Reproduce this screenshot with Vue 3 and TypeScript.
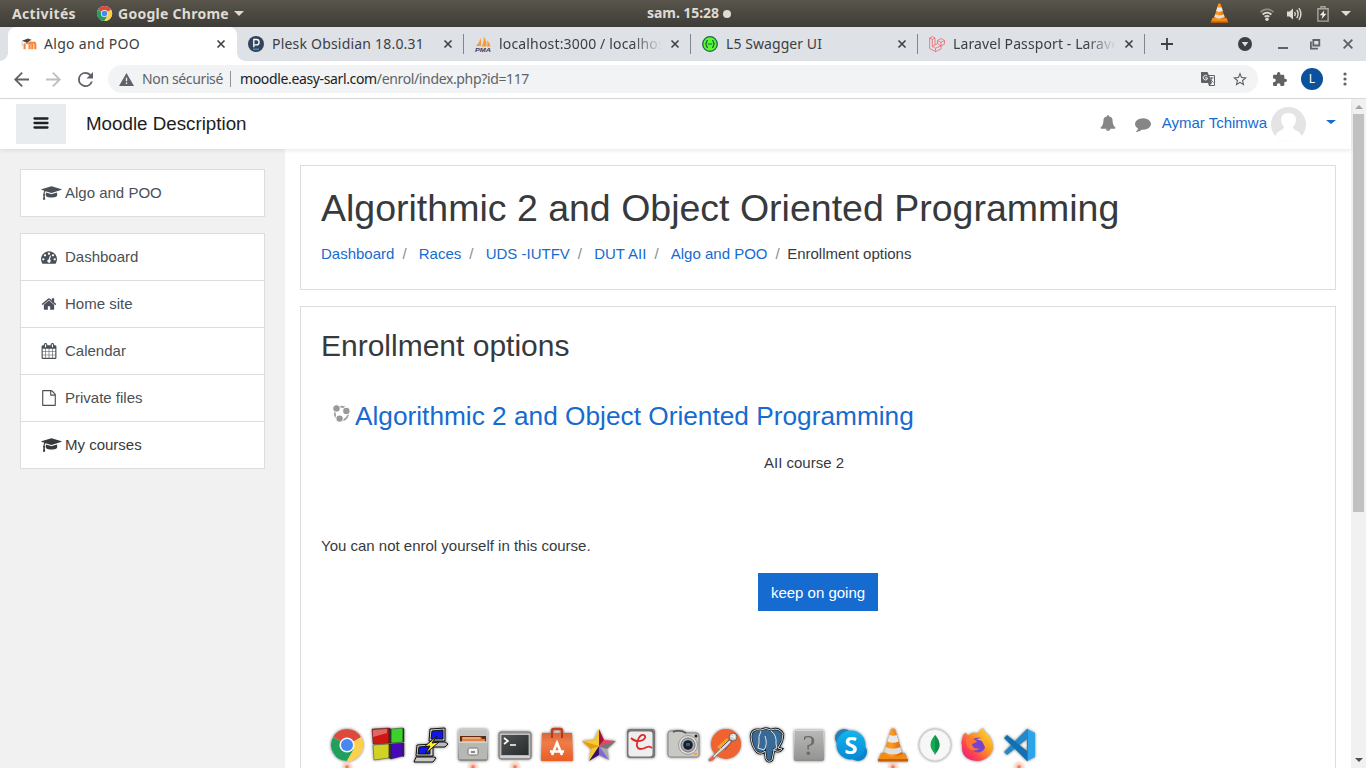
<script setup lang="ts">
import type { Directive } from 'vue'

interface Tab { title: string; icon: string; width: number; fade?: boolean }
interface NavItem { label: string; icon: string; dark?: boolean }

const tabs: Tab[] = [
  { title: 'Algo and POO', icon: 'moodle', width: 96 },
  { title: 'Plesk Obsidian 18.0.31', icon: 'plesk', width: 152 },
  { title: 'localhost:3000 / localhost', icon: 'pma', width: 171, fade: true },
  { title: 'L5 Swagger UI', icon: 'swagger', width: 96 },
  { title: 'Laravel Passport - Laravel', icon: 'laravel', width: 170, fade: true },
]

const nav: NavItem[] = [
  { label: 'Dashboard', icon: 'dash' },
  { label: 'Home site', icon: 'home' },
  { label: 'Calendar', icon: 'calendar' },
  { label: 'Private files', icon: 'file' },
  { label: 'My courses', icon: 'cap', dark: true },
]

const crumbs = ['Dashboard', 'Races', 'UDS -IUTFV', 'DUT AII', 'Algo and POO']

const glyphs: Record<string, string> = {
  cap: 'M1774 836l18 316q4 69-82 128t-235 93.5-323 34.5-323-34.5-235-93.5-82-128l18-316 574 181q22 7 48 7t48-7zm530-324q0 23-22 31l-1120 352q-4 1-10 1t-10-1l-652-206q-43 34-71 111.5t-34 178.5q63 36 63 109 0 69-58 107l58 433q2 14-8 25-9 11-24 11h-192q-15 0-24-11-10-11-8-25l58-433q-58-38-58-107 0-73 65-111 11-207 98-330l-333-104q-22-8-22-31t22-31l1120-352q4-1 10-1t10 1l1120 352q22 8 22 31z',
  dash: 'M384 1152q0-53-37.5-90.5t-90.5-37.5-90.5 37.5-37.5 90.5 37.5 90.5 90.5 37.5 90.5-37.5 37.5-90.5zm192-448q0-53-37.5-90.5t-90.5-37.5-90.5 37.5-37.5 90.5 37.5 90.5 90.5 37.5 90.5-37.5 37.5-90.5zm428 481l101-382q6-26-7.5-48.5t-38.5-29.5-48 6.5-30 39.5l-101 382q-60 5-107 43.5t-63 98.5q-20 77 20 146t117 89 146-20 89-117q16-60-6-117t-72-91zm660-33q0-53-37.5-90.5t-90.5-37.5-90.5 37.5-37.5 90.5 37.5 90.5 90.5 37.5 90.5-37.5 37.5-90.5zm-640-640q0-53-37.5-90.5t-90.5-37.5-90.5 37.5-37.5 90.5 37.5 90.5 90.5 37.5 90.5-37.5 37.5-90.5zm448 192q0-53-37.5-90.5t-90.5-37.5-90.5 37.5-37.5 90.5 37.5 90.5 90.5 37.5 90.5-37.5 37.5-90.5zm320 448q0 261-141 483-19 29-54 29h-1402q-35 0-54-29-141-221-141-483 0-182 71-348t191-286 286-191 348-71 348 71 286 191 191 286 71 348z',
  home: 'M1472 992v480q0 26-19 45t-45 19h-384v-384h-256v384h-384q-26 0-45-19t-19-45v-480q0-1 .5-3t.5-3l575-474 575 474q1 2 1 6zm223-69l-62 74q-8 9-21 11h-3q-13 0-21-7l-692-577-692 577q-12 8-24 7-13-2-21-11l-62-74q-8-10-7-23.500t11-21.500l719-599q32-26 76-26t76 26l244 204v-195q0-14 9-23t23-9h192q14 0 23 9t9 23v408l219 182q10 8 11 21.500t-7 23.500z',
  calendar: 'M192 1664h288v-288h-288v288zm352 0h320v-288h-320v288zm-352-352h288v-320h-288v320zm352 0h320v-320h-320v320zm-352-384h288v-288h-288v288zm736 736h320v-288h-320v288zm-384-736h320v-288h-320v288zm768 736h288v-288h-288v288zm-384-352h320v-320h-320v320zm-352-864v-288q0-13-9.500-22.500t-22.500-9.500h-64q-13 0-22.500 9.500t-9.500 22.500v288q0 13 9.500 22.500t22.500 9.500h64q13 0 22.500-9.500t9.500-22.500zm736 864h288v-320h-288v320zm-384-384h320v-288h-320v288zm384 0h288v-288h-288v288zm32-480v-288q0-13-9.500-22.500t-22.500-9.500h-64q-13 0-22.500 9.500t-9.500 22.500v288q0 13 9.500 22.500t22.500 9.500h64q13 0 22.500-9.500t9.500-22.500zm384-64v1280q0 52-38 90t-90 38h-1408q-52 0-90-38t-38-90v-1280q0-52 38-90t90-38h128v-96q0-66 47-113t113-47h64q66 0 113 47t47 113v96h384v-96q0-66 47-113t113-47h64q66 0 113 47t47 113v96h128q52 0 90 38t38 90z',
  file: 'M1596 380q28 28 48 76t20 88v1152q0 40-28 68t-68 28h-1344q-40 0-68-28t-28-68v-1600q0-40 28-68t68-28h896q40 0 88 20t76 48zm-444-244v376h376q-10-29-22-41l-313-313q-12-12-41-22zm384 1528v-1024h-416q-40 0-68-28t-28-68v-416h-768v1536h1280z',
  bell: 'M912 1696q0-16-16-16-59 0-101.500-42.500t-42.500-101.500q0-16-16-16t-16 16q0 73 51.500 124.500t124.500 51.500q16 0 16-16zm816-288q0 52-38 90t-90 38h-448q0 106-75 181t-181 75-181-75-75-181h-448q-52 0-90-38t-38-90q50-42 91-88t85-119.500 74.500-158.500 50-206 19.500-260q0-152 117-282.500t307-158.500q-8-19-8-39 0-40 28-68t68-28 68 28 28 68q0 20-8 39 190 28 307 158.500t117 282.500q0 139 19.500 260t50 206 74.500 158.500 85 119.500 91 88z',
  comment: 'M1792 896q0 174-120 321.500t-326 233-450 85.500q-70 0-145-8-198 175-460 242-49 14-114 22-17 2-30.500-9t-17.500-29v-1q-3-4-.5-12t2-10 4.500-9.500l6-9 7-8.500 8-9q7-8 31-34.500t34.500-38 31-39.500 32.500-51 27-59 26-76q-157-89-247.500-220t-90.500-281q0-130 71-248.500t191-204.500 286-136.500 348-50.500q244 0 450 85.500t326 233 120 321.500z',
}

// Spreads a label's letters so that the line takes the given width in pixels.
const vFit: Directive<HTMLElement, number> = {
  mounted(el, binding) {
    const natural = el.getBoundingClientRect().width
    const count = (el.textContent ?? '').length
    el.style.letterSpacing = `${(binding.value - natural) / count}px`
  },
}
</script>

<template>
  <div class="screen">
    <svg class="defs" width="0" height="0">
      <defs>
        <linearGradient id="metal" x1="0" y1="0" x2="0" y2="1"><stop offset="0" stop-color="#d8d8d6" /><stop offset="1" stop-color="#8c8c8a" /></linearGradient>
        <linearGradient id="dark" x1="0" y1="0" x2="1" y2="1"><stop offset="0" stop-color="#555" /><stop offset="1" stop-color="#242a2a" /></linearGradient>
        <linearGradient id="bag" x1="0" y1="0" x2="0" y2="1"><stop offset="0" stop-color="#d9643a" /><stop offset=".35" stop-color="#f07c48" /><stop offset="1" stop-color="#ea5d24" /></linearGradient>
        <linearGradient id="fox" x1="1" y1="0" x2="0" y2="1"><stop offset="0" stop-color="#ffe83a" /><stop offset=".4" stop-color="#ff9a1f" /><stop offset=".7" stop-color="#ff4350" /><stop offset="1" stop-color="#e01588" /></linearGradient>
        <linearGradient id="sky" x1="0" y1="0" x2="0" y2="1"><stop offset="0" stop-color="#13b5ed" /><stop offset="1" stop-color="#0589d6" /></linearGradient>
        <linearGradient id="cone" x1="0" y1="0" x2="1" y2="0"><stop offset="0" stop-color="#f08a14" /><stop offset=".4" stop-color="#ff9b25" /><stop offset="1" stop-color="#d95f00" /></linearGradient>
        <symbol id="chrome" viewBox="0 0 36 36">
          <circle cx="18" cy="18" r="16" fill="#fff" />
          <path d="M18 18L4.140 10A16 16 0 0 1 31.860 10Z" fill="#dc4a3d" />
          <path d="M18 18L4.140 10A16 16 0 0 0 18 34L25 22Z" fill="#20a05c" />
          <path d="M18 18L31.860 10A16 16 0 0 1 18 34L25 22Z" fill="#fdd04c" />
          <path d="M18 10H31.860L25 14Z" fill="#dc4a3d" />
          <path d="M18 34l7-12v-7l7-5A16 16 0 0 1 18 34Z" fill="#fdd04c" />
          <circle cx="18" cy="18" r="7.600" fill="#f5f5f5" />
          <circle cx="18" cy="18" r="6" fill="#4687f4" />
        </symbol>
        <symbol id="vlc" viewBox="0 0 36 36">
          <path d="M6 26h24l3 8H3z" fill="#f28b16" /><path d="M3 32h30v2.500H3z" fill="#c95f00" />
          <path d="M16 2q2-1 4 0l7.500 25q-9.500 6-19 0z" fill="url(#cone)" />
          <path d="M14.300 8q3.700 1.500 7.400 0l2 6.500q-5.700 2.500-11.400 0z" fill="#e9e9e9" />
          <path d="M10.700 20q7.300 3.500 14.600 0l1.600 5q-9 5-17.800 0z" fill="#dedede" />
        </symbol>
      </defs>
    </svg>

    <header class="topbar">
      <div class="act"><span v-fit="64">Activités</span></div>
      <div class="app-menu">
        <svg class="ic16" viewBox="0 0 36 36"><use href="#chrome" /></svg>
        <span v-fit="111">Google Chrome</span><i class="tri"></i>
      </div>
      <div class="clock"><span v-fit="72">sam. 15:28</span><i class="dot"></i></div>
      <div class="tray">
        <svg class="vlc-tray" viewBox="0 0 36 36"><use href="#vlc" /></svg>
        <svg class="wifi" viewBox="0 0 16 16" fill="none" stroke-width="1.700"><path d="M1.500 6Q8 .5 14.500 6" stroke="#8b8983" /><path d="M3.600 8.500Q8 4.800 12.400 8.500M5.600 10.800Q8 9 10.400 10.800" stroke="#dfdbd2" /><circle cx="8" cy="13.300" r="1.700" fill="#dfdbd2" /></svg>
        <svg class="vol" viewBox="0 0 16 16" fill="none" stroke="#dfdbd2" stroke-width="1.400"><path d="M1 5.500h2.500L7 2.500v11L3.500 10.500H1z" fill="#dfdbd2" stroke="none" /><path d="M8.700 6q1.200 2 0 4M10.800 4q2.600 4 0 8M12.900 2.200q4 5.800 0 11.600" /></svg>
        <svg class="bat" viewBox="0 0 12 16" fill="none" stroke="#aaa69e" stroke-width="1.400"><path d="M4 2.200V.7h4v1.500M.9 2.700h10.200v12.400H.9z" /><path d="M7.300 4.500L2.800 9.200h2.700l-1 4 4.900-5.400H6.800z" fill="#eee" stroke="none" /></svg>
        <i class="tri tray-tri"></i>
      </div>
    </header>

    <div class="tabstrip">
      <div v-for="(tab, i) in tabs" :key="tab.title" class="tab" :class="{ active: i === 0, sep: i > 1 }">
        <svg v-if="tab.icon === 'moodle'" class="fav" viewBox="0 0 16 16"><path d="M3.600 13.300V7.500M8.600 13.300V8.500q0-1.800 1.500-1.800M8.600 8.500q0-2 1.400-2 1.300 0 1.300 2v4.800M11.300 8.500q0-2 1.500-2t1.500 2v4.800" fill="none" stroke="#f8893c" stroke-width="2.200" /><path d="M4.800 6.200h4v2h-4z" fill="#f8893c" /><path d="M1 4.800l6-2.300 3.500 1.200L6 6.800z" fill="#494440" /><path d="M1.200 5v5" stroke="#b8aca0" stroke-width=".6" /></svg>
        <svg v-else-if="tab.icon === 'plesk'" class="fav" viewBox="0 0 16 16"><circle cx="8" cy="8" r="8" fill="#34435c" /><path d="M5.800 11.200V3.500H8.400a2.300 2.300 0 0 1 0 5.400H6" fill="none" stroke="#fff" stroke-width="1.300" /><path d="M5 13.200h6" stroke="#44afe0" /></svg>
        <svg v-else-if="tab.icon === 'pma'" class="fav" viewBox="0 0 16 16"><path d="M1 10q4-4 4.500-8 1 4 .5 8zM6.500 10.500Q9.500 5 8.500.5q3.500 4 3 10zM12 10.500q.8-3 0-6 3 2 3.500 6z" fill="#f59c36" /><text x="0" y="15.700" font-size="6" font-weight="bold" font-style="italic" font-family="Liberation Sans" fill="#393966" textLength="16" lengthAdjust="spacingAndGlyphs">PMA</text></svg>
        <svg v-else-if="tab.icon === 'swagger'" class="fav" viewBox="0 0 16 16"><circle cx="8" cy="8" r="7.300" fill="#55fa36" stroke="#266342" stroke-width="1.300" /><path d="M6 4.500q-1.500 0-1.500 1.700Q4.500 8 3 8q1.500 0 1.500 1.800Q4.500 11.500 6 11.500M10 4.500q1.500 0 1.500 1.700Q11.500 8 13 8q-1.500 0-1.500 1.800 0 1.700-1.500 1.700M5.800 8h4.400" fill="none" stroke="#23563b" stroke-width="1.200" /></svg>
        <svg v-else class="fav" viewBox="0 0 16 16" fill="none" stroke="#f6636c" stroke-width=".8"><path d="M.6 2L3.300.5 6 2v7l2.500-1.500v-3l3.500-2 3.500 2v3.600L12 10v3l-5.500 2.600L.6 12.400zM.6 2l2.700 1.500L6 2M3.300 3.500v7L6 9M8.500 4.500L12 6.300l3.500-1.800M12 6.300V10L8.500 7.500M3.300 10.500l3.200 1.700L12 9.900M6.500 12.200v3.400" /></svg>
        <div class="title" :class="{ fade: tab.fade }"><span v-fit="tab.width">{{ tab.title }}</span></div>
        <svg class="close" viewBox="0 0 8 8"><path d="M.5.5l7 7M7.500.5l-7 7" stroke="#3c4043" stroke-width="1.600" /></svg>
      </div>
      <div class="newtab"><svg viewBox="0 0 12 12"><path d="M6 0v12M0 6h12" stroke="#3c4043" stroke-width="1.800" /></svg></div>
      <div class="winctl">
        <svg class="w14" viewBox="0 0 14 14"><circle cx="7" cy="7" r="7" fill="#3c4043" /><path d="M3.700 5h6.600L7 9.500z" fill="#dee1e6" /></svg>
        <svg class="w10" viewBox="0 0 10 14"><path d="M0 11h10" stroke="#5f6368" stroke-width="2" /></svg>
        <svg class="w10" viewBox="0 0 10 14" fill="none" stroke="#5f6368" stroke-width="1.800"><path d="M3.300 3h6v5.500h-6zM.9 4.500v7.200h7" /></svg>
        <svg class="w10" viewBox="0 0 10 14"><path d="M.7 2.700l8.600 8.600M9.300 2.700L.7 11.300" stroke="#5f6368" stroke-width="1.900" /></svg>
      </div>
    </div>

    <div class="toolbar">
      <svg class="nv" viewBox="4 4 16 16"><path d="M20 11H7.830l5.590-5.590L12 4l-8 8 8 8 1.410-1.410L7.830 13H20z" fill="#5f6368" /></svg>
      <svg class="nv" viewBox="4 4 16 16"><path d="M12 4l-1.410 1.410L16.170 11H4v2h12.170l-5.580 5.590L12 20l8-8z" fill="#bcbec1" /></svg>
      <svg class="nv" viewBox="4 4 16 16"><path d="M17.650 6.350A7.960 7.960 0 0 0 12 4a8 8 0 1 0 7.730 10h-2.080A6 6 0 1 1 12 6c1.660 0 3.140.690 4.220 1.780L13 11h7V4z" fill="#5f6368" /></svg>
      <div class="omni">
        <svg class="warn" viewBox="1 2 22 19"><path d="M1 21h22L12 2zm12-3h-2v-2h2zm0-4h-2v-5h2z" fill="#5f6368" /></svg>
        <span v-fit="81" class="ns">Non sécurisé</span><i class="bar"></i>
        <span v-fit="289" class="url"><b>moodle.easy-sarl.com</b>/enrol/index.php?id=117</span>
        <svg class="tr" viewBox="0 0 14 14"><path d="M0 0h6.500l1.300 3H13q1 0 1 1v9q0 1-1 1H8l-1-3H1q-1 0-1-1z" fill="#5f6368" /><path d="M8.300 4H13v9H9l2-2z" fill="#f1f3f4" /><path d="M6.200 4A2.300 2.300 0 1 0 6.300 7.200V5.900H4" fill="none" stroke="#f1f3f4" stroke-width="1" /><path d="M8.500 6h4M10.500 5v1q0 2-1.500 3M9.500 7.500l3 3" fill="none" stroke="#5f6368" stroke-width=".9" /></svg>
        <svg class="star" viewBox="2 2 20 19"><path d="M22 9.240l-7.190-.62L12 2 9.190 8.630 2 9.240l5.460 4.730L5.820 21 12 17.270 18.180 21l-1.630-7.030zM12 15.400l-3.760 2.270 1-4.280-3.320-2.880 4.380-.38L12 6.100l1.710 4.040 4.380.38-3.320 2.880 1 4.280z" fill="#5f6368" /></svg>
      </div>
      <svg class="puzzle" viewBox="2 1 21 21"><path d="M20.500 11H19V7a2 2 0 0 0-2-2h-4V3.500a2.500 2.500 0 0 0-5 0V5H4a2 2 0 0 0-2 2v3.800h1.500a2.700 2.700 0 0 1 0 5.400H2V20a2 2 0 0 0 2 2h3.800v-1.500a2.700 2.700 0 0 1 5.400 0V22H17a2 2 0 0 0 2-2v-4h1.500a2.500 2.500 0 0 0 0-5z" fill="#5f6368" /></svg>
      <div class="profile">L</div>
      <svg class="dots" viewBox="0 0 4 14" fill="#5f6368"><circle cx="2" cy="2" r="1.600" /><circle cx="2" cy="7" r="1.600" /><circle cx="2" cy="12" r="1.600" /></svg>
    </div>

    <div class="viewport">
      <div class="page">
        <nav class="navbar">
          <button class="burger" aria-label="Menu"><svg viewBox="0 0 14 12"><path d="M.5 1.500h13M.5 6h13M.5 10.500h13" stroke="#1d2125" stroke-width="2.300" stroke-linecap="round" /></svg></button>
          <span class="brand">Moodle Description</span>
          <div class="user">
            <svg class="bell" viewBox="0 0 1792 1792"><path :d="glyphs.bell" /></svg>
            <svg class="comment" viewBox="0 0 1792 1792"><path :d="glyphs.comment" /></svg>
            <a>Aymar Tchimwa</a>
            <svg class="avatar" viewBox="0 0 35 35"><defs><clipPath id="round"><circle cx="17.500" cy="17.500" r="17.500" /></clipPath></defs><g clip-path="url(#round)"><path d="M0 0h35v35H0z" fill="#e4e4e4" /><path d="M10 13Q10 6 17.500 6T25 13q0 4-2.800 6.300-.3 2.700 1.500 3.500 6 2 7.300 7V35h-27v-5.200q1.500-5 7.300-7 1.800-.8 1.500-3.500Q10 17 10 13z" fill="#fff" /></g></svg>
            <i class="caret"></i>
          </div>
        </nav>
        <div class="body">
          <aside>
            <div class="list"><a class="item"><svg class="cap" viewBox="0 0 2304 1792"><path :d="glyphs.cap" /></svg>Algo and POO</a></div>
            <div class="list">
              <a v-for="n in nav" :key="n.label" class="item" :class="{ strong: n.dark }">
                <svg :class="n.icon" :viewBox="n.icon === 'cap' ? '0 0 2304 1792' : '0 0 1792 1792'"><path :d="glyphs[n.icon]" /></svg>{{ n.label }}
              </a>
            </div>
          </aside>
          <main>
            <section class="card head">
              <h1>Algorithmic 2 and Object Oriented Programming</h1>
              <div class="crumbs"><template v-for="c in crumbs" :key="c"><a>{{ c }}</a><span class="slash">/</span></template><span class="here">Enrollment options</span></div>
            </section>
            <section class="card content">
              <h2>Enrollment options</h2>
              <h3><svg viewBox="0 0 16 16"><circle cx="8" cy="8" r="6.300" fill="none" stroke="#a5a5a5" stroke-width="1.800" /><g fill="#999" stroke="#fff" stroke-width="1"><circle cx="3.300" cy="3.200" r="3.500" /><circle cx="12.600" cy="5.600" r="3.500" /><circle cx="6.200" cy="12.800" r="3.500" /></g></svg><a>Algorithmic 2 and Object Oriented Programming</a></h3>
              <p class="summary">AII course 2</p>
              <p class="notice">You can not enrol yourself in this course.</p>
              <button class="go">keep on going</button>
            </section>
          </main>
        </div>
      </div>
      <div class="scroll"><i class="up"></i><i class="thumb"></i><i class="down"></i></div>
    </div>

    <div class="dock">
      <div class="cell run"><svg viewBox="0 0 36 36"><use href="#chrome" /></svg></div>
      <div class="cell"><svg viewBox="0 0 36 36"><g stroke="#222" stroke-width=".4"><path d="M1 2l17-1v15L2 17z" fill="#ce1712" /><path d="M20 2l12-1v14l-12 1z" fill="#3cd02a" /><path d="M2 18l16-1v14L3 33z" fill="#d2d126" /><path d="M20 17l12-1v13l-12 3z" fill="#4708b7" /><path d="M18 1l2 1v14l-2 0zM18 17l2 0v15l-2-1zM32 1l1 1v13l-1 0zM32 16l1 0v13l-1 1z" fill="#333" /></g><path d="M2 3l14-1v4L2 10z" fill="#fff" opacity=".35" /></svg></div>
      <div class="cell"><svg viewBox="0 0 36 36"><g stroke="#111" stroke-width="1"><path d="M17 2l15-1v13H16z" fill="#d0d0cc" /><path d="M19 4l11-1v9H18z" fill="#1117e8" /><path d="M17 15h15l3 2-3 3H16z" fill="#bbb" /><path d="M4 18l16-1v12H3z" fill="#d0d0cc" /><path d="M6 20l11-1v8H5z" fill="#1117e8" /><path d="M3 30h18l2 1-3 4H1z" fill="#c9c9c5" /><path d="M24 9L11 20l6-1-5 8 14-12-7 1z" fill="#fff12d" /></g></svg></div>
      <div class="cell run"><svg viewBox="0 0 36 36"><rect x="3" y="2" width="30" height="32" rx="3" fill="url(#metal)" /><path d="M4 4q0-1.500 2-1.500h24q2 0 2 1.500v5H4z" fill="#c3c3bf" /><path d="M5 9h26v6H5z" fill="#5d2b16" /><path d="M7 10h19l1 2h3v3H7z" fill="#e28343" /><path d="M8 11h17" stroke="#f7cda0" /><path d="M4 15h28v17H4z" fill="#b7b7b4" /><path d="M4 15h28" stroke="#eee" /><rect x="13" y="21" width="10" height="7" rx="1.500" fill="#f2f2f2" stroke="#777" /><path d="M16 24h4v2h-4z" fill="#888" /></svg></div>
      <div class="cell run"><svg viewBox="0 0 36 36"><rect x="2" y="5" width="32" height="27" rx="2" fill="#aaa" stroke="#777" /><rect x="4" y="7.500" width="28" height="21" fill="url(#dark)" stroke="#eee" stroke-width=".6" /><path d="M7 11l4 3-4 3M13 18h6" fill="none" stroke="#fff" stroke-width="1.600" /><path d="M3 30h30" stroke="#ddd" stroke-width="1.500" /></svg></div>
      <div class="cell"><svg viewBox="0 0 36 36"><path d="M13 8V4q0-2 2-2h6q2 0 2 2v4" fill="none" stroke="#ca3f18" stroke-width="2.500" /><path d="M3 6h30l1 27q0 1-1 1H3q-1 0-1-1z" fill="url(#bag)" /><path d="M13 28l5-12 5 12M11 24.500h14" fill="none" stroke="#fff" stroke-width="2.600" /><path d="M13 6v5M23 6v5" stroke="#a92f10" stroke-width="1.700" /></svg></div>
      <div class="cell"><svg viewBox="0 0 36 36"><path d="M18 2l-5 11-12 1 9 8-2 12 10-6z" fill="#f4ca31" /><path d="M18 2l5 11-5 6z" fill="#a50f3b" /><path d="M23 13l12 1-17 6z" fill="#ee4060" /><path d="M35 14l-9 8-8-3z" fill="#777" /><path d="M26 22l2 11-10-13z" fill="#aaa" /><path d="M18 19v9L8 34z" fill="#361071" /><path d="M18 19l10 14-10-5z" fill="#8566d4" /><path d="M1 14l17 5-8 3z" fill="#e79b15" /></svg></div>
      <div class="cell"><svg viewBox="0 0 36 36"><rect x="4" y="2" width="28" height="29" rx="3" fill="#777" /><rect x="5.500" y="4.500" width="24" height="25" rx="3" fill="#eee" /><path d="M8 11q5 5 12 2 4-3 1-5-4-1-6 5-3 8 2 9 4 0 7-2 3-1 5 1" fill="none" stroke="#e02a28" stroke-width="1.800" /></svg></div>
      <div class="cell"><svg viewBox="0 0 36 36"><path d="M6 4h11q2 0 3 2h11q3 0 3 3v19q0 2-2 2H5q-2 0-2-3V7q0-3 3-3z" fill="#c8c8c4" stroke="#888" /><path d="M8 5q6-3 13 1" stroke="#555" fill="none" stroke-width="1.500" /><circle cx="23" cy="18" r="9.500" fill="#ddd" stroke="#999" /><circle cx="23" cy="18" r="7" fill="#aaa" stroke="#777" /><circle cx="23" cy="18" r="4.800" fill="#181f28" /><path d="M21 16h4v3h-4z" fill="#315494" /><circle cx="31" cy="9" r="1.500" fill="#222" /><path d="M29 26h3v2h-3z" fill="#f5a23a" /></svg></div>
      <div class="cell"><svg viewBox="0 0 36 36"><circle cx="19" cy="17" r="15" fill="#f0622f" /><path d="M2 34q1-3 4-5L22 13l3 2L9 29q-2 4-7 5z" fill="#ddd" stroke="#777" stroke-width=".8" /><path d="M10 20l10-9 2 3-9 8z" fill="#f7a32a" /><path d="M14 21l10-10M18 23l7-9" stroke="#656" stroke-width="1" /><circle cx="26" cy="10" r="4" fill="#ccc" stroke="#765" /><path d="M24 9l4 2M26 7l2 3" stroke="#fff" /><path d="M1 33l5-4 2 2-3 3z" fill="#e96342" /></svg></div>
      <div class="cell"><svg viewBox="0 0 36 36"><path d="M12 3Q2 1 2 10q1 10 6 15 4 3 8-1l1 8q2 4 6 1l2-10q5 3 8-1l-4-1q5-6 5-14-4-7-12-4-5-3-10 0z" fill="#386a95" stroke="#15191c" stroke-width="2.400" /><path d="M12 3Q2 1 2 10q1 10 6 15 4 3 8-1l1 8q2 4 6 1l2-10q5 3 8-1l-4-1q5-6 5-14-4-7-12-4-5-3-10 0z" fill="none" stroke="#eee" stroke-width=".9" /><path d="M12 4q-3 5-2 12l-1 5 6 2q4-6 1-14M22 4q6 4 5 13l1 4-4 2" fill="none" stroke="#eee" stroke-width=".9" /></svg></div>
      <div class="cell"><svg viewBox="0 0 36 36"><rect x="3" y="3" width="30" height="31" rx="2" fill="url(#metal)" /><path d="M4 4h28v28H4z" fill="#999" opacity=".5" /><text x="18" y="28" text-anchor="middle" font-family="Liberation Serif" font-size="29" fill="#6a6a6a">?</text></svg></div>
      <div class="cell"><svg viewBox="0 0 36 36"><circle cx="11" cy="11" r="9" fill="#2380ba" /><circle cx="25" cy="25" r="9" fill="#0784cf" /><circle cx="18" cy="18" r="14.500" fill="url(#sky)" /><text x="18" y="26.500" text-anchor="middle" font-family="Open Sans" font-weight="bold" font-size="24" fill="#fff">S</text></svg></div>
      <div class="cell run"><svg viewBox="0 0 36 36"><use href="#vlc" /></svg></div>
      <div class="cell"><svg viewBox="0 0 36 36"><circle cx="18" cy="18" r="15.500" fill="#f7f7f7" stroke="#ddd" /><path d="M18 8q-9 10 0 19 9-9 0-19z" fill="#13aa52" /><path d="M18 8v19q9-9 0-19z" fill="#118d4d" /><path d="M18 24v4" stroke="#888" stroke-width=".8" /></svg></div>
      <div class="cell"><svg viewBox="0 0 36 36"><path d="M3 13q1-7 4-7l2 3q4-4 8-3l2 1q2-4 5-6 1 4 4 6l3 3q6 11 0 18-6 6-13 6-16-1-15-16-1-2 0-5z" fill="url(#fox)" /><circle cx="19" cy="18" r="7.500" fill="#7744ce" /><path d="M7 12q9-1 11 3l-5 2q1 6 8 4-7 6-13-2z" fill="#ff7635" /><path d="M23 10q5 6 4 12l-4-8-6-2 6-1z" fill="#ffaf25" /></svg></div>
      <div class="cell run"><svg viewBox="0 0 36 36"><path d="M26 2l8 4v24l-8 4z" fill="#2ba4ea" /><path d="M26 2v10L6 28l-3-3z" fill="#2489ca" /><path d="M26 34V24L6 8l-3 3z" fill="#1070b3" /><path d="M26 2l1 0v32l-1 0z" fill="#1687cf" /></svg></div>
    </div>
  </div>
</template>

<style>
body { margin: 0; overflow: hidden; }
</style>

<style scoped>
.screen { position: relative; width: 1366px; height: 768px; overflow: hidden; display: flex; flex-direction: column; background: #fff; font: 15px/22.5px "Liberation Sans", Arial, sans-serif; color: #373a3c; }
.screen * { box-sizing: border-box; }
svg { display: block; flex: none; overflow: visible; }
.defs { position: absolute; }
[class] > span { white-space: nowrap; }

.topbar { height: 27px; flex: none; display: flex; align-items: center; background: linear-gradient(#59554c, #3e3c37); color: #dfdbd2; font: bold 14px/27px "Noto Sans", sans-serif; }
.act { width: 96px; padding-left: 12px; }
.app-menu { width: 551px; display: flex; align-items: center; }
.ic16 { width: 17px; height: 17px; margin-right: 5px; }
.tri { border: 5px solid transparent; border-top-color: #dfdbd2; border-bottom: 0; margin-left: 5px; }
.clock { width: 562px; display: flex; align-items: center; }
.clock span { position: relative; top: -1px; }
.dot { width: 8px; height: 8px; border-radius: 50%; background: #dfdbd2; margin-left: 4px; }
.tray { display: flex; align-items: center; }
.vlc-tray { width: 21px; height: 22px; margin: 0 29px 1px 0; }
.wifi { width: 16px; height: 16px; margin-right: 11px; }
.vol { width: 16px; height: 16px; margin-right: 15px; }
.bat { width: 12px; height: 16px; }
.tray-tri { margin-left: 12px; }

.tabstrip { height: 34px; flex: none; display: flex; background: #dee1e6; padding-left: 9px; font: 14px/34px "Noto Sans", sans-serif; color: #3c4043; }
.tab { position: relative; flex: none; width: 227px; padding-left: 12px; display: flex; align-items: center; }
.tab.active { background: #fff; margin-left: -1px; width: 229px; margin-right: -1px; padding-left: 13px; border-radius: 8px 8px 0 0; }
.tab.active::before, .tab.active::after { content: ""; position: absolute; bottom: 0; width: 8px; height: 8px; }
.tab.active::before { left: -8px; background: radial-gradient(circle at 0 0, transparent 7.500px, #fff 8px); }
.tab.active::after { right: -8px; background: radial-gradient(circle at 100% 0, transparent 7.500px, #fff 8px); }
.tab.sep::before, .newtab::before { content: ""; position: absolute; left: 0; top: 7px; width: 1px; height: 20px; background: #80868b; }
.fav { width: 16px; height: 16px; margin-right: 8px; }
.tab.active .fav { margin-right: 7px; }
.title { width: 163px; flex: none; overflow: hidden; white-space: nowrap; }
.title span, .act span { display: inline-block; }
.fade { -webkit-mask-image: linear-gradient(90deg, #000 82%, transparent); mask-image: linear-gradient(90deg, #000 82%, transparent); }
.close { width: 8px; height: 8px; margin-left: 9px; }
.tab.active .close { margin-left: 10px; }
.newtab { position: relative; flex: none; width: 94px; padding: 11px 0 0 17px; }
.newtab svg { width: 12px; height: 12px; }
.winctl { flex: none; display: flex; align-items: center; }
.w14 { width: 14px; height: 14px; margin-right: 26px; }
.w10 { width: 10px; height: 14px; margin-right: 22px; }
.w10:nth-child(3) { margin-right: 23px; }

.toolbar { height: 38px; flex: none; display: flex; align-items: center; padding-left: 14px; padding-bottom: 1px; border-bottom: 1px solid #d5d7da; background: #fff; }
.nv { width: 15px; height: 15px; margin-right: 17px; }
.omni { width: 1150px; height: 28px; margin-left: -2px; border-radius: 14px; background: #f1f3f4; display: flex; align-items: center; padding-left: 11px; font: 14px/28px "Noto Sans", sans-serif; }
.warn { width: 15px; height: 13px; margin-right: 8px; }
.ns { color: #5f6368; }
.bar { width: 1px; height: 16px; background: #909498; margin: 0 9px 0 7px; }
.url { color: #5f6368; }
.url b { font-weight: 400; color: #202124; }
.tr { width: 14px; height: 14px; margin-left: auto; margin-right: 18px; }
.star { width: 14px; height: 14px; margin-right: 11px; }
.puzzle { width: 14px; height: 14px; margin-left: 15px; }
.profile { width: 22px; height: 22px; margin-left: 14px; border-radius: 50%; background: #0b519c; color: #fff; font: 12px/22px "Noto Sans", sans-serif; text-align: center; }
.dots { width: 4px; height: 14px; margin-left: 20px; }

.viewport { flex: 1; min-height: 0; display: flex; }
.page { flex: 1; display: flex; flex-direction: column; min-width: 0; }
.navbar { position: relative; z-index: 1; height: 50px; flex: none; display: flex; align-items: center; padding-left: 16px; background: #fff; box-shadow: 0 2px 4px rgba(0, 0, 0, .08); }
.burger { width: 50px; height: 40px; border: 0; background: #e9ecef; padding: 0 0 2px 18px; }
.burger svg { width: 14px; height: 12px; }
.brand { margin-left: 20px; font-size: 18.750px; color: #1d1d1d; }
a { color: #166bd0; }
.user { margin-left: auto; display: flex; align-items: center; padding-right: 15px; }
.user a { padding-bottom: 2px; }
.user svg path { fill: #868686; }
.bell, .comment { width: 16px; height: 16px; }
.bell { margin: 0 19px 2px 0; }
.comment { margin-right: 11px; }
.avatar { width: 35px; height: 35px; margin: 0 20px 0 4px; }
.user .avatar path:first-child { fill: #e4e4e4; }
.user .avatar path:last-child { fill: #fff; }
.caret { border: 5px solid transparent; border-top: 4.500px solid #166bd0; border-bottom: 0; margin-bottom: 4px; }
.body { flex: 1; min-height: 0; display: flex; }
aside { width: 285px; flex: none; background: #f1f1f1; padding: 20px; }
.list { border: 1px solid #dcdddf; background: #fff; margin-bottom: 16px; }
.item { height: 46px; display: flex; align-items: center; padding-left: 20px; color: #495057; }
.item + .item { height: 47px; border-top: 1px solid #dcdddf; }
.item svg { width: 16px; height: 16px; margin: 0 8px 1px 0; fill: currentColor; }
.item .cap { width: 21px; height: 16px; margin-right: 3px; }
.strong { color: #373a3c; }
main { flex: 1; padding: 16px 15px 0; display: flex; flex-direction: column; }
.card { border: 1px solid #dcdddf; background: #fff; padding: 20px; }
.head { height: 125px; flex: none; margin-bottom: 16px; }
h1, h2, h3 { margin: 0; font-weight: 400; color: #373a3c; white-space: nowrap; }
h1 { font-size: 37.500px; line-height: 45px; }
.crumbs { margin-top: 12px; display: flex; }
.slash { color: #868e96; padding: 0 12.200px 0 8px; }
.slash:nth-last-child(2) { padding-right: 7.500px; }
.content { flex: 1; display: flex; flex-direction: column; padding: 21px 20px 0; border-bottom: 0; }
h2 { font-size: 30px; line-height: 36px; }
h3 { display: flex; margin: 36px 0 0 12px; font-size: 26.250px; line-height: 32px; }
h3 svg { width: 17px; height: 17px; margin: 5px 5px 0 0; }
p { margin: 0; }
.summary { margin-top: 20px; margin-right: 28px; text-align: center; }
.notice { margin-top: 60px; }
.go { align-self: center; margin-top: 16px; width: 120px; height: 38px; border: 0; padding: 0; background: #166bd0; color: #fff; font: 15px "Liberation Sans", sans-serif; }
.scroll { width: 15px; background: #f1f1f1; padding: 6px 2px 6px; display: flex; flex-direction: column; align-items: center; }
.up { border: 4px solid transparent; border-bottom-color: #a3a3a3; border-top: 0; margin-bottom: 5px; }
.thumb { width: 11px; height: 398px; background: #c1c1c1; }
.down { margin-top: auto; border: 4px solid transparent; border-top-color: #505050; border-bottom: 0; }

.dock { position: absolute; left: 326px; top: 727px; display: flex; }
.cell { position: relative; width: 42px; height: 42px; padding-left: 3px; }
.cell svg { width: 36px; height: 36px; filter: drop-shadow(0 0 1.500px rgba(0, 0, 0, .55)); }
.cell.run::after { content: ""; position: absolute; left: 14px; bottom: -5px; width: 14px; height: 14px; background: radial-gradient(circle, rgba(232, 96, 44, .8) 0 1px, rgba(240, 120, 80, .4) 2.500px, transparent 7px); }
</style>
